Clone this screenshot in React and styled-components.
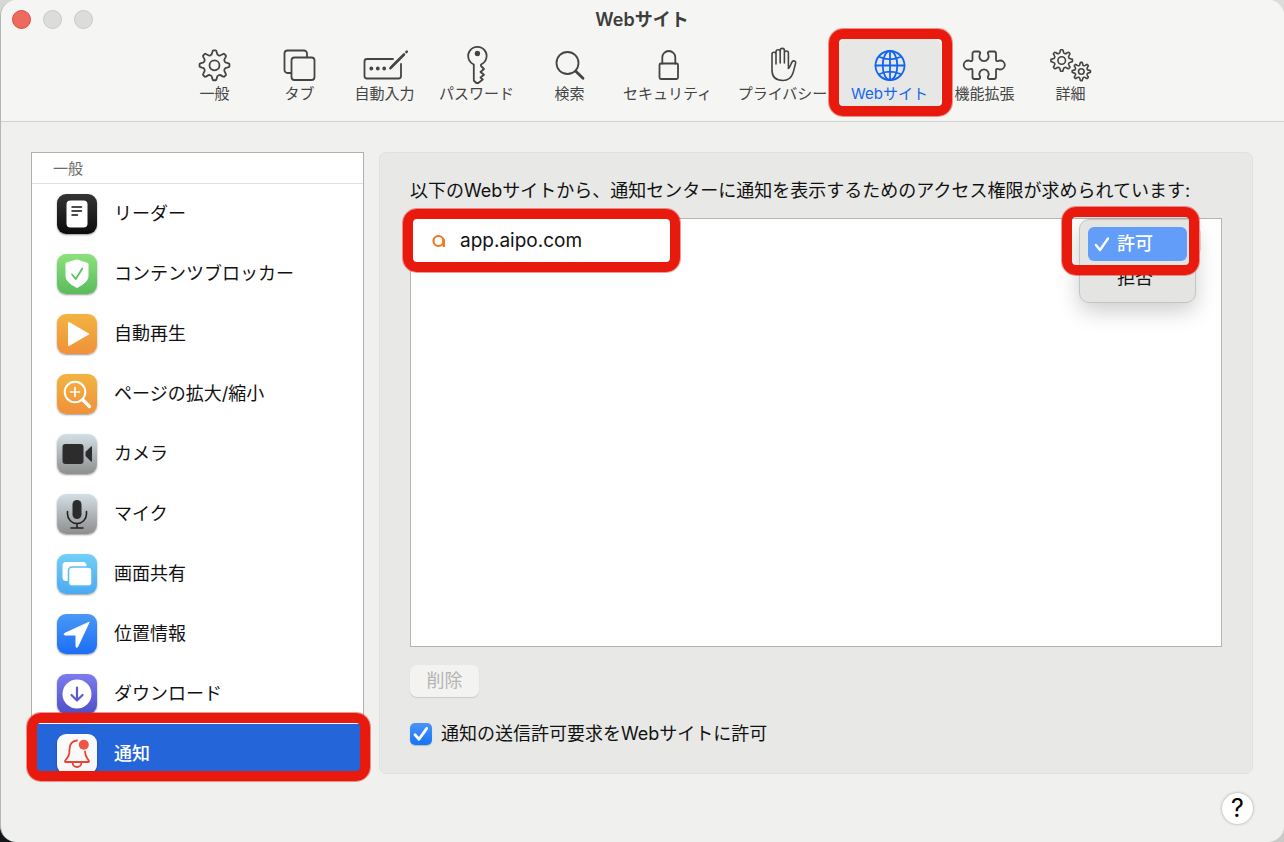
import React, { useState } from 'react'
import styled, { createGlobalStyle, css } from 'styled-components'

const ink = '#444443'
const accent = '#1266f1'
const marker = '#e8190d'

const GlobalStyle = createGlobalStyle`
    * {
        box-sizing: border-box;
    }

    body {
        margin: 0;
        background: linear-gradient(10deg, #15161c 0, #15161c 20px, #c9c9c8 160px, #dcdcdb 100%);
        font-family: Inter, 'Noto Sans CJK JP', sans-serif;
        font-size: 18px;
        line-height: 24px;
        color: #111;
    }

    button, select, input {
        font: inherit;
        color: inherit;
        margin: 0;
    }
`

const Window = styled.div`
    min-height: 100vh;
    display: flex;
    flex-direction: column;
    border-left: 1px solid #b4b5b5;
    border-radius: 16px;
    overflow: hidden;
    background: #f0f0ee;
`

const Header = styled.header`
    background: #f5f5f3;
    border-bottom: 1px solid #d2d2d0;
    padding-bottom: 14px;
`

const TitleBar = styled.div`
    display: grid;
    grid-template-columns: 1fr auto 1fr;
    align-items: center;
    height: 39px;
    padding: 0 12px 0 11px;
`

const Lights = styled.div`
    display: flex;
    gap: 12px;
`

const Light = styled.button`
    width: 19px;
    height: 19px;
    padding: 0;
    border-radius: 50%;
    border: 1px solid ${props => props.$close ? '#e0493e' : '#c9c9c7'};
    background: ${props => props.$close ? '#ed6a5e' : '#dcdcda'};
`

const Title = styled.h1`
    margin: 0;
    font-size: 18px;
    line-height: 24px;
    font-weight: 600;
    color: #3d3d3c;
`

const Toolbar = styled.nav`
    display: flex;
    justify-content: center;
    padding-left: 4px;
`

const Tool = styled.button`
    position: relative;
    display: flex;
    flex-direction: column;
    align-items: center;
    flex: none;
    width: ${props => props.$width}px;
    height: 68px;
    padding: 6px 0 4px;
    border: 0;
    border-radius: 8px;
    background: ${props => props.$active ? '#e7e7e5' : 'none'};
    color: ${props => props.$active ? accent : ink};
    font-size: 15px;
    line-height: 18px;
    white-space: nowrap;

    svg {
        flex: none;
        width: 48px;
        height: 40px;
        fill: none;
        stroke: currentColor;
        stroke-width: 1.8;
        stroke-linecap: round;
        stroke-linejoin: round;
    }
`

const Main = styled.main`
    flex: 1;
    display: flex;
    gap: 15px;
    padding: 30px 31px 0 30px;
`

const SidebarWrap = styled.aside`
    position: relative;
    flex: none;
    width: 333px;
    height: 622px;
`

const Sidebar = styled.div`
    height: 100%;
    overflow: hidden;
    background: #fff;
    border: 1px solid #b0b0af;
`

const SidebarHeading = styled.h2`
    margin: 0;
    height: 31px;
    padding: 4px 21px;
    border-bottom: 1px solid #dededd;
    font-size: 15px;
    font-weight: 400;
    color: #6b6b6a;
`

const SidebarList = styled.ul`
    list-style: none;
    margin: 0;
    padding: 0;
`

const SidebarItem = styled.button`
    display: flex;
    align-items: center;
    gap: 17px;
    width: 100%;
    height: 60px;
    padding: 0 25px;
    border: 0;
    background: ${props => props.$active ? '#2465da' : 'none'};
    color: ${props => props.$active ? '#fff' : '#111'};
    font-weight: ${props => props.$active ? 500 : 400};
    text-align: left;
`

const Tile = styled.svg`
    flex: none;
    width: 40px;
    height: 40px;
    border-radius: 9px;
    background: linear-gradient(${props => props.$from}, ${props => props.$to});
    box-shadow: 0 1px 2px rgba(0, 0, 0, .4);
    stroke-linecap: round;
    stroke-linejoin: round;
`

const Panel = styled.section`
    flex: 1;
    height: 622px;
    padding: 26px 30px;
    background: #e8e8e6;
    border: 1px solid #e0e0de;
    border-radius: 7px;
`

const Lead = styled.p`
    margin: 0 0 15px;
    white-space: nowrap;
`

const SiteList = styled.div`
    height: 429px;
    background: #fff;
    border: 1px solid #b5b5b4;
`

const SiteRow = styled.div`
    position: relative;
    display: flex;
    align-items: center;
    gap: 13px;
    height: 44px;
    padding: 0 20px;

    > svg {
        flex: none;
    }
`

const SiteName = styled.span`
    font-size: 19px;
`

const PolicySelect = styled.select`
    appearance: none;
    margin-left: auto;
    width: 122px;
    height: 28px;
    padding: 0 36px;
    border: 1px solid #dadad9;
    border-radius: 6px;
    background: #fff;
`

const Menu = styled.ul`
    position: absolute;
    top: 0;
    right: 25px;
    width: 117px;
    margin: 0;
    padding: 7px 8px;
    list-style: none;
    background: #e4e4e2;
    border: 1px solid #c4c4c3;
    border-radius: 10px;
    box-shadow: 0 8px 22px rgba(0, 0, 0, .2);
`

const MenuItem = styled.li`
    display: flex;
    align-items: center;
    height: 34px;
    padding-left: ${props => props.$active ? 5 : 29}px;
    gap: 6px;
    border-radius: 6px;
    ${props => props.$active && css`
        background: #629df9;
        color: #fff;
        font-weight: 500;
    `}
`

const DeleteButton = styled.button`
    display: block;
    width: 69px;
    height: 32px;
    margin: 18px 0 25px;
    padding: 0;
    border: 0;
    border-radius: 7px;
    background: #f3f3f2;
    box-shadow: 0 1px 1px rgba(0, 0, 0, .14);

    &:disabled {
        color: #b4b4b3;
    }
`

const CheckLabel = styled.label`
    display: flex;
    align-items: center;
    gap: 9px;
    height: 24px;
`

const Checkbox = styled.input`
    appearance: none;
    width: 22px;
    height: 22px;
    border-radius: 5px;
    background: #fff;
    box-shadow: 0 1px 1px rgba(0, 0, 0, .2);

    &:checked {
        background: url("data:image/svg+xml,%3Csvg xmlns='http://www.w3.org/2000/svg' viewBox='0 0 22 22'%3E%3Cpath d='M5 11.8l4 4.4L16.8 5.4' fill='none' stroke='white' stroke-width='2.8' stroke-linecap='round' stroke-linejoin='round'/%3E%3C/svg%3E"),
            linear-gradient(#4a94f8, #1573f7);
    }
`

const Footer = styled.footer`
    display: flex;
    justify-content: flex-end;
    padding: 19px 31px 18px;
`

const HelpButton = styled.button`
    width: 31px;
    height: 31px;
    padding: 0;
    border: 0;
    border-radius: 50%;
    background: #fff;
    box-shadow: 0 0 3px rgba(0, 0, 0, .35);
    font-size: 25px;
    line-height: 31px;
    color: #000;
`

// Red highlighter frame laid over the part it points at
const Marker = styled.span`
    position: absolute;
    z-index: 2;
    top: ${props => props.$top}px;
    right: ${props => props.$right}px;
    bottom: ${props => props.$bottom}px;
    left: ${props => props.$left}px;
    height: ${props => props.$height ? `${props.$height}px` : 'auto'};
    width: ${props => props.$width ? `${props.$width}px` : 'auto'};
    border: 10px solid ${marker};
    border-radius: 14px;
    box-shadow: 0 0 0 1px rgba(232, 25, 13, .45);
    pointer-events: none;
`

const gearPath = (cx, cy, outer, inner, teeth) => {
    const step = (Math.PI * 2) / teeth
    const at = (r, a) => `${(cx + r * Math.sin(a)).toFixed(2)} ${(cy - r * Math.cos(a)).toFixed(2)}`
    const valley = (inner * step * 0.28).toFixed(2)
    let d = ''

    for (let i = 0; i < teeth; i++) {
        const a = i * step
        d += `${i ? 'L' : 'M'}${at(inner, a - step * 0.24)}`
        d += `L${at(outer - 0.8, a - step * 0.17)}Q${at(outer, a - step * 0.15)} ${at(outer, a - step * 0.1)}`
        d += `L${at(outer, a + step * 0.1)}Q${at(outer, a + step * 0.15)} ${at(outer - 0.8, a + step * 0.17)}`
        d += `L${at(inner, a + step * 0.24)}A${valley} ${valley} 0 0 0 ${at(inner, a + step * 0.76)}`
    }

    return d + 'Z'
}

const tools = [
    {
        label: '一般',
        width: 76,
        icon: <><path d={gearPath(23.5, 20.3, 15, 12.8, 8)} /><circle cx="23.500" cy="20.300" r="5" /></>
    },
    {
        label: 'タブ',
        width: 94,
        icon: <><path d="M15 28h-3.500a3 3 0 0 1-3-3V8.500a3 3 0 0 1 3-3H28a3 3 0 0 1 3 3v3.500" /><rect x="15.500" y="12.500" width="23" height="22.500" rx="3" /></>
    },
    {
        label: '自動入力',
        width: 76,
        icon: (
            <>
                <path d="M32 14H6a2.500 2.500 0 0 0-2.500 2.500V31A2.500 2.500 0 0 0 6 33.500h31.500A2.500 2.500 0 0 0 40 31V19" />
                <path d="M30.500 22L43 9.500" strokeWidth="2.600" />
                <path d="M29.300 23.300l.6-.6M45.300 7.200l.6-.6" strokeWidth="2.400" />
                <path d="M10.300 23.500h.01M16.800 23.500h.01M23.200 23.500h.01" strokeWidth="3.800" />
            </>
        )
    },
    {
        label: 'パスワード',
        width: 108,
        icon: <><path d="M20.800 19.500A9.200 9.200 0 1 1 28 19.500V21l3 3-3.500 3 3.500 2.800-3.500 2.700 2.300 2-4.500 3.500h-2l-2.500-2.500Z" /><circle cx="24.400" cy="8.500" r="1.800" fill="currentColor" /></>
    },
    {
        label: '検索',
        width: 78,
        icon: <><circle cx="21.500" cy="18" r="11" /><path d="M29.800 26.300l7.200 7" strokeWidth="2.800" /></>
    },
    {
        label: 'セキュリティ',
        width: 118,
        icon: <><rect x="15.500" y="18.500" width="18.500" height="15.500" rx="1.500" /><path d="M18.300 18.500v-6a6.500 6.500 0 0 1 13 0v6" /></>
    },
    {
        label: 'プライバシー',
        width: 112,
        icon: <path strokeWidth="1.600" d="M13 25V9.200a2 2 0 0 1 4 0V19V6.800a2.100 2.100 0 0 1 4.200 0V18V5.500a2.100 2.100 0 0 1 4.200 0V18V8a2 2 0 0 1 4 0V23.500C31 22.500 32 18.500 33.200 16.800C34.500 15 37.200 16 36.600 18.200C35.500 22 35 25 33.800 28.500C32 33.500 28.500 35.500 24 35.500C17 35.500 13 32 13 25Z" />
    },
    {
        label: 'Webサイト',
        width: 102,
        icon: <><circle cx="24" cy="20.500" r="14.500" /><ellipse cx="24" cy="20.500" rx="7.300" ry="14.500" /><path d="M24 6v29M9.500 20.500h29M13 11.800q11 5 22 0M13 29.200q11-5 22 0" /></>
    },
    {
        label: '機能拡張',
        width: 88,
        icon: <path d="M13.500 6.500H17.500c2 0 2 1.500 1.200 3a4.700 4.700 0 1 0 8.600 0c-.8-1.500-.8-3 1.200-3H33a2 2 0 0 1 2 2V14.500c0 2 1.500 2 3 1.200a4.500 4.500 0 1 1 0 8.600c-1.500-.8-3-.8-3 1.200V32a2 2 0 0 1-2 2H28.500c-2 0-2-1.500-1.200-3a4.700 4.700 0 1 0-8.600 0c.8 1.500.8 3-1.200 3H13.500a2 2 0 0 1-2-2V25.500c0-2-1.500-2-3-1.200a4.500 4.500 0 1 1 0-8.600c1.500.8 3 .8 3-1.200V8.500a2 2 0 0 1 2-2Z" />
    },
    {
        label: '詳細',
        width: 84,
        icon: (
            <g strokeWidth="1.600">
                <path d={gearPath(14.7, 15.5, 10.8, 9, 8)} />
                <circle cx="14.700" cy="15.500" r="3.800" />
                <path d={gearPath(34.3, 26.5, 9.2, 7.5, 8)} />
                <circle cx="34.300" cy="26.500" r="2.800" />
            </g>
        )
    }
]

const categories = [
    {
        label: 'リーダー',
        from: '#343434',
        to: '#0c0c0c',
        icon: <><rect x="9.500" y="6.500" width="21" height="27" rx="4" fill="#fff" /><path d="M15 13h9.500M15 17h9.500M15 21h5.500" stroke="#111" strokeWidth="1.400" /></>
    },
    {
        label: 'コンテンツブロッカー',
        from: '#8be27c',
        to: '#5abb5c',
        icon: <><path d="M20 6l11 3.500v12.500c0 5-5 8.500-11 11.500-6-3-11-6.500-11-11.500V9.500Z" fill="#fff" stroke="#fff" /><path d="M15 20.500l3.800 4.500 6.500-10.500" fill="none" stroke="#5cc35c" strokeWidth="1.800" /></>
    },
    {
        label: '自動再生',
        from: '#f2b441',
        to: '#f0913a',
        icon: <path d="M12 9l19 11-19 11Z" fill="#fff" stroke="#fff" strokeWidth="2" />
    },
    {
        label: 'ページの拡大/縮小',
        from: '#f2b441',
        to: '#f0913a',
        icon: <g fill="none" stroke="#fff"><circle cx="18" cy="18" r="10.300" strokeWidth="2" /><path d="M26 26l6.500 6.500" strokeWidth="3.200" /><path d="M18 13.500v9M13.500 18h9" strokeWidth="1.600" /></g>
    },
    {
        label: 'カメラ',
        from: '#d3dfe5',
        to: '#8e8e8e',
        icon: <g fill="#2c2c2c"><rect x="5.500" y="10" width="21" height="20" rx="3" /><path d="M28.500 18l5.500-5.500q1-.7 1 .5v14q0 1.200-1 .5L28.500 22Z" /></g>
    },
    {
        label: 'マイク',
        from: '#d3dfe5',
        to: '#8e8e8e',
        icon: <><rect x="15.500" y="6" width="9" height="19" rx="4.500" fill="#2c2c2c" /><path d="M10.500 17.500v2.500a9.500 9.500 0 0 0 19 0v-2.500M20 29.500v4.500M14 34h12" fill="none" stroke="#222" strokeWidth="1.600" /></>
    },
    {
        label: '画面共有',
        from: '#72cff6',
        to: '#4ba9f2',
        icon: <><rect x="5.500" y="8" width="24" height="19" rx="3.500" fill="#fff" /><rect x="11.500" y="13" width="23.500" height="19" rx="3.500" fill="#fff" stroke="#5cbcf4" strokeWidth="1.600" /></>
    },
    {
        label: '位置情報',
        from: '#4a98f7',
        to: '#1b6ef6',
        icon: <path d="M32 8.500L20.500 33Q19.500 34 19 32.500V22Q19 21 18 21H8Q6 20.500 7.500 19.500Z" fill="#fff" stroke="#fff" />
    },
    {
        label: 'ダウンロード',
        from: '#7c7cf0',
        to: '#4e50c6',
        icon: <><circle cx="20" cy="20" r="14.500" fill="#fff" /><path d="M20 13.500v12.500M14.500 21l5.500 5.500 5.500-5.500" fill="none" stroke="#5a5bd4" strokeWidth="2.200" /></>
    },
    {
        label: '通知',
        from: '#fbfbfb',
        to: '#f7f7f7',
        icon: <><path d="M20 6.500C15 7 12.500 10.500 12.500 15.500C12.500 21 11.500 22.500 9 25.500Q7 28 9 28H31Q33 28 31 25.500C28.500 22.500 28 21 28 17.500M15.500 28.500a4.500 4.500 0 0 0 9 0" fill="none" stroke="#e8432f" strokeWidth="1.800" /><circle cx="26.800" cy="10.800" r="5" fill="#ee5545" /></>
    }
]

const App = () => {
    const [activeTool, setActiveTool] = useState('Webサイト')
    const [activeCategory, setActiveCategory] = useState('通知')
    const [policy, setPolicy] = useState('許可')

    return (
        <Window>
            <GlobalStyle />
            <Header>
                <TitleBar>
                    <Lights>
                        <Light $close aria-label="閉じる" />
                        <Light aria-label="しまう" />
                        <Light aria-label="拡大" />
                    </Lights>
                    <Title>Webサイト</Title>
                </TitleBar>
                <Toolbar>
                    {tools.map(({ label, width, icon }) => (
                        <Tool key={label} $width={width} $active={label === activeTool} onClick={_ => setActiveTool(label)}>
                            <svg viewBox="0 0 48 40" aria-hidden="true">{icon}</svg>
                            {label}
                            {label === 'Webサイト' && <Marker $top={-10} $right={-11} $bottom={-9} $left={-10} />}
                        </Tool>
                    ))}
                </Toolbar>
            </Header>

            <Main>
                <SidebarWrap>
                    <Sidebar>
                        <SidebarHeading>一般</SidebarHeading>
                        <SidebarList>
                            {categories.map(({ label, from, to, icon }) => (
                                <li key={label}>
                                    <SidebarItem $active={label === activeCategory} onClick={_ => setActiveCategory(label)}>
                                        <Tile viewBox="0 0 40 40" $from={from} $to={to} aria-hidden="true">{icon}</Tile>
                                        {label}
                                    </SidebarItem>
                                </li>
                            ))}
                        </SidebarList>
                    </Sidebar>
                    <Marker $right={-6} $bottom={-7} $left={-4} $height={68} />
                </SidebarWrap>

                <Panel>
                    <Lead>以下のWebサイトから、通知センターに通知を表示するためのアクセス権限が求められています:</Lead>
                    <SiteList>
                        <SiteRow>
                            <svg width="16" height="16" viewBox="0 0 16 16" fill="none" stroke="#ee7623" strokeWidth="2.200" aria-hidden="true">
                                <circle cx="7.500" cy="8" r="5" />
                                <path d="M12.800 6v8" />
                            </svg>
                            <SiteName>app.aipo.com</SiteName>
                            <PolicySelect aria-label="app.aipo.com" value={policy} onChange={e => setPolicy(e.target.value)}>
                                <option>許可</option>
                                <option>拒否</option>
                            </PolicySelect>
                            <Menu role="listbox">
                                <MenuItem role="option" aria-selected="true" $active onClick={_ => setPolicy('許可')}>
                                    <svg width="18" height="18" viewBox="0 0 18 18" fill="none" stroke="#fff" strokeWidth="2.400" strokeLinecap="round" strokeLinejoin="round" aria-hidden="true">
                                        <path d="M3 10l4 5L15 3.500" />
                                    </svg>
                                    許可
                                </MenuItem>
                                <MenuItem role="option" aria-selected="false" onClick={_ => setPolicy('拒否')}>拒否</MenuItem>
                            </Menu>
                            <Marker $top={-10} $left={-8} $width={277} $height={63} />
                            <Marker $top={-12} $right={22} $width={137} $height={68} />
                        </SiteRow>
                    </SiteList>
                    <DeleteButton disabled>削除</DeleteButton>
                    <CheckLabel>
                        <Checkbox type="checkbox" defaultChecked />
                        通知の送信許可要求をWebサイトに許可
                    </CheckLabel>
                </Panel>
            </Main>

            <Footer>
                <HelpButton aria-label="ヘルプ">?</HelpButton>
            </Footer>
        </Window>
    )
}

export default App
